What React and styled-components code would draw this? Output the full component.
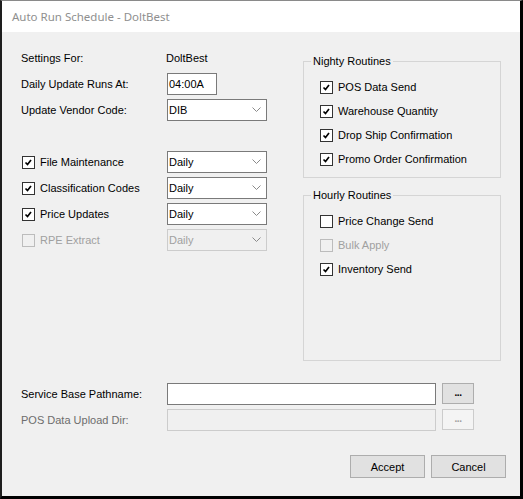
import React from "react";
import styled, { createGlobalStyle } from "styled-components";

const GlobalStyle = createGlobalStyle`
  * { box-sizing: border-box; }
  body {
    margin: 0;
    background: #ffffff;
    font-family: "Liberation Sans", Arial, sans-serif;
  }
`;

const Window = styled.div`
  width: 523px;
  height: 499px;
  display: flex;
  flex-direction: column;
  background: #f0f0f0;
  border-top: 1px solid #8a8a8a;
  border-left: 2px solid #1e1e1e;
  border-right: 3px solid #000;
  border-bottom: 3px solid #000;
`;

const TitleBar = styled.div`
  height: 31px;
  flex: 0 0 31px;
  background: #ffffff;
  display: flex;
  align-items: center;
  padding-left: 10px;
  font-family: "Noto Sans", "Open Sans", sans-serif;
  font-size: 11.5px;
  color: #8f8f8f;
`;

const Body = styled.div`
  flex: 1;
  display: flex;
  flex-direction: column;
  padding: 15px 14px 0 19px;
  font-size: 11px;
  color: #000;
`;

const TopSection = styled.div`
  display: flex;
  align-items: flex-start;
`;

const LeftColumn = styled.div`
  flex: 0 0 282px;
  display: flex;
  flex-direction: column;
`;

const RightColumn = styled.div`
  flex: 0 0 198px;
  display: flex;
  flex-direction: column;
  margin-top: 8px;
`;

const FormGrid = styled.div`
  display: grid;
  grid-template-columns: 146px auto;
  grid-auto-rows: 22px;
  row-gap: 4px;
  align-items: center;
  margin-top: ${(p) => p.$top || 0}px;
`;

const Label = styled.span`
  color: ${(p) => (p.$disabled ? "#6d6d6d" : "#000")};
  white-space: nowrap;
`;

const Value = styled.span`
  margin-left: -1px;
`;

const TextBox = styled.div`
  width: ${(p) => p.$w}px;
  height: 22px;
  border: 1px solid ${(p) => (p.$disabled ? "#cccccc" : "#7a7a7a")};
  background: ${(p) => (p.$disabled ? "#f0f0f0" : "#ffffff")};
  display: flex;
  align-items: center;
  padding-left: 1px;
`;

const ComboBox = styled.div`
  width: 100px;
  height: 22px;
  border: 1px solid ${(p) => (p.$disabled ? "#cccccc" : "#7a7a7a")};
  background: ${(p) => (p.$disabled ? "#f0f0f0" : "#ffffff")};
  color: ${(p) => (p.$disabled ? "#a0a0a0" : "#000")};
  display: flex;
  align-items: center;
  justify-content: space-between;
  padding: 0 5px 1px 1px;
`;

const CheckLine = styled.label`
  display: flex;
  align-items: center;
  gap: 5px;
  height: ${(p) => p.$h || 22}px;
  color: ${(p) => (p.$disabled ? "#a0a0a0" : "#000")};
  white-space: nowrap;
`;

const Box = styled.span`
  width: 13px;
  height: 13px;
  flex: 0 0 13px;
  margin-left: 1px;
  border: 1px solid ${(p) => (p.$disabled ? "#bcbcbc" : "#333333")};
  background: ${(p) => (p.$disabled ? "#f0f0f0" : "#ffffff")};
  display: flex;
  align-items: center;
  justify-content: center;
`;

const Group = styled.fieldset`
  margin: 0;
  min-width: 0;
  border: 1px solid #d5d5d5;
  padding: 7px 7px ${(p) => p.$bottom}px 7px;
  & + & {
    margin-top: 11px;
  }
`;

const Legend = styled.legend`
  padding: 0 2px;
  font-size: 11px;
  line-height: 13px;
  color: #000;
`;

const GroupList = styled.div`
  display: flex;
  flex-direction: column;
  padding-left: 8px;
`;

const PathSection = styled.div`
  display: grid;
  grid-template-columns: 140px 269px 32px;
  column-gap: 6px;
  grid-auto-rows: 22px;
  row-gap: 4px;
  align-items: center;
  margin-top: 22px;
`;

const SmallButton = styled.div`
  width: 32px;
  height: 21px;
  align-self: start;
  border: 1px solid ${(p) => (p.$disabled ? "#cccccc" : "#adadad")};
  background: ${(p) => (p.$disabled ? "#f4f4f4" : "#e1e1e1")};
  color: ${(p) => (p.$disabled ? "#a0a0a0" : "#000")};
  display: flex;
  align-items: center;
  justify-content: center;
  font-size: 10px;
  font-weight: bold;
  letter-spacing: -0.5px;
  padding-bottom: 3px;
`;

const ButtonRow = styled.div`
  display: flex;
  justify-content: flex-end;
  gap: 6px;
  margin-top: 24px;
`;

const Button = styled.div`
  width: 75px;
  height: 23px;
  border: 1px solid #adadad;
  background: #e1e1e1;
  display: flex;
  align-items: center;
  justify-content: center;
  font-size: 11px;
`;

const Chevron = () => (
  <svg width="9" height="5" viewBox="0 0 9 5">
    <polyline points="0.5,0.5 4.5,4.5 8.5,0.5" fill="none" stroke="#8a8a8a" strokeWidth="1" />
  </svg>
);

const Check = () => (
  <svg width="11" height="11" viewBox="0 0 11 11">
    <polyline points="2.5,5.5 4.5,7.5 8,3" fill="none" stroke="#000" strokeWidth="1.7" />
  </svg>
);

const CheckBox = ({ checked, disabled, children, h }) => (
  <CheckLine $disabled={disabled} $h={h}>
    <Box $disabled={disabled}>{checked && <Check />}</Box>
    {children}
  </CheckLine>
);

const Combo = ({ value, disabled }) => (
  <ComboBox $disabled={disabled}>
    <span>{value}</span>
    <Chevron />
  </ComboBox>
);

const schedules = [
  { name: "File Maintenance", checked: true },
  { name: "Classification Codes", checked: true },
  { name: "Price Updates", checked: true },
  { name: "RPE Extract", checked: false, disabled: true },
];

const nightly = ["POS Data Send", "Warehouse Quantity", "Drop Ship Confirmation", "Promo Order Confirmation"];

const hourly = [
  { name: "Price Change Send", checked: false },
  { name: "Bulk Apply", checked: false, disabled: true },
  { name: "Inventory Send", checked: true },
];

export default function App() {
  return (
    <>
      <GlobalStyle />
      <Window>
        <TitleBar>Auto Run Schedule - DoltBest</TitleBar>
        <Body>
          <TopSection>
            <LeftColumn>
              <FormGrid>
                <Label>Settings For:</Label>
                <Value>DoltBest</Value>
                <Label>Daily Update Runs At:</Label>
                <TextBox $w={50}>04:00A</TextBox>
                <Label>Update Vendor Code:</Label>
                <Combo value="DIB" />
              </FormGrid>
              <FormGrid $top={30}>
                {schedules.map((s) => (
                  <React.Fragment key={s.name}>
                    <CheckBox checked={s.checked} disabled={s.disabled}>
                      {s.name}
                    </CheckBox>
                    <Combo value="Daily" disabled={s.disabled} />
                  </React.Fragment>
                ))}
              </FormGrid>
            </LeftColumn>
            <RightColumn>
              <Group $bottom={6}>
                <Legend>Nighty Routines</Legend>
                <GroupList>
                  {nightly.map((n) => (
                    <CheckBox key={n} checked h={24}>
                      {n}
                    </CheckBox>
                  ))}
                </GroupList>
              </Group>
              <Group $bottom={79}>
                <Legend>Hourly Routines</Legend>
                <GroupList>
                  {hourly.map((n) => (
                    <CheckBox key={n.name} checked={n.checked} disabled={n.disabled} h={24}>
                      {n.name}
                    </CheckBox>
                  ))}
                </GroupList>
              </Group>
            </RightColumn>
          </TopSection>
          <PathSection>
            <Label>Service Base Pathname:</Label>
            <TextBox $w={269} />
            <SmallButton>...</SmallButton>
            <Label $disabled>POS Data Upload Dir:</Label>
            <TextBox $w={269} $disabled />
            <SmallButton $disabled>...</SmallButton>
          </PathSection>
          <ButtonRow>
            <Button>Accept</Button>
            <Button>Cancel</Button>
          </ButtonRow>
        </Body>
      </Window>
    </>
  );
}
